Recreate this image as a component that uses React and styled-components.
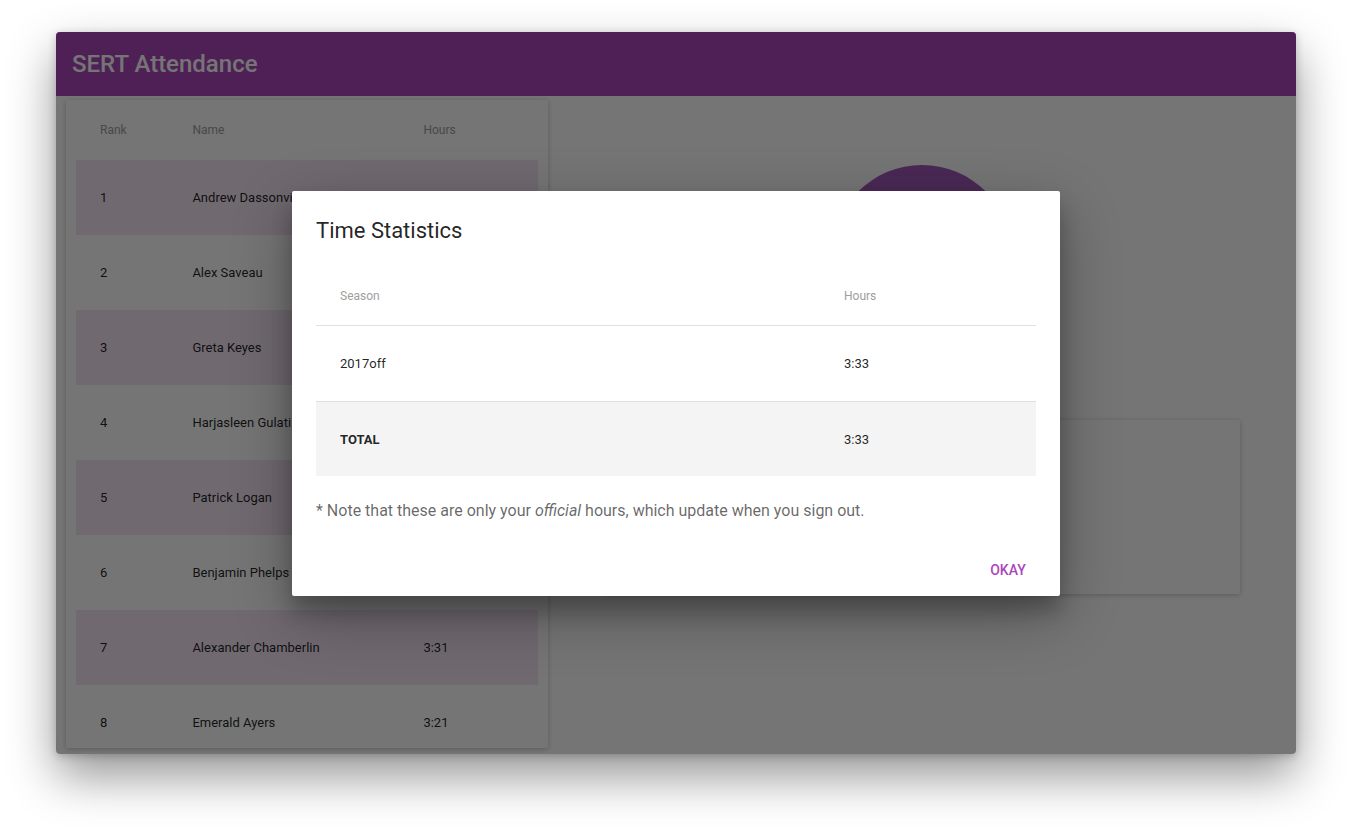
import styled, { createGlobalStyle } from "styled-components";

const Global = createGlobalStyle`
  html, body {
    margin: 0;
    padding: 0;
    background: #fff;
  }
  body {
    font-family: Roboto, "Liberation Sans", sans-serif;
    -webkit-font-smoothing: antialiased;
  }
`;

const Page = styled.div`
  padding: 32px 56px;
  min-height: 834px;
  box-sizing: border-box;
`;

const Window = styled.div`
  position: relative;
  width: 1240px;
  height: 722px;
  border-radius: 4px;
  overflow: hidden;
  background: #fff;
  box-shadow: 0 22px 48px rgba(0, 0, 0, 0.42), 0 2px 8px rgba(0, 0, 0, 0.2);
`;

const AppBar = styled.header`
  height: 64px;
  display: flex;
  align-items: center;
  padding: 0 16px;
  background: #ab47bc;
`;

const Title = styled.h1`
  margin: 0;
  font-size: 24px;
  font-weight: 500;
  color: #fff;
  line-height: 64px;
`;

const Main = styled.div`
  display: flex;
  height: 658px;
`;

const LeftCol = styled.div`
  width: 492px;
  padding: 4px 0 6px 10px;
  box-sizing: border-box;
`;

const Card = styled.div`
  background: #fff;
  box-shadow: 0 1px 6px rgba(0, 0, 0, 0.12), 0 1px 4px rgba(0, 0, 0, 0.12);
  border-radius: 2px;
  padding: 0 10px;
  height: 648px;
  overflow: hidden;
`;

const Row = styled.div`
  display: grid;
  grid-template-columns: ${({ cols }) => cols};
  align-items: center;
  height: ${({ h }) => h}px;
  box-sizing: border-box;
  background: ${({ bg }) => bg || "transparent"};
  border-bottom: ${({ line }) => (line ? "1px solid #e0e0e0" : "none")};
`;

const HeadCell = styled.div`
  padding-left: 24px;
  font-size: 12px;
  color: #9e9e9e;
`;

const Cell = styled.div`
  padding-left: 24px;
  font-size: 13px;
  color: rgba(0, 0, 0, 0.87);
  font-weight: ${({ bold }) => (bold ? 700 : 400)};
  white-space: nowrap;
`;

const RightCol = styled.div`
  flex: 1;
  display: flex;
  flex-direction: column;
  align-items: center;
`;

const Avatar = styled.div`
  width: 180px;
  height: 180px;
  border-radius: 50%;
  background: #a15bb9;
  margin-top: 69px;
`;

const InfoCard = styled.div`
  width: 636px;
  height: 174px;
  margin-top: 75px;
  background: #fff;
  box-shadow: 0 1px 6px rgba(0, 0, 0, 0.12), 0 1px 4px rgba(0, 0, 0, 0.12);
  border-radius: 2px;
`;

const Backdrop = styled.div`
  position: absolute;
  inset: 0;
  background: rgba(0, 0, 0, 0.54);
  display: flex;
  align-items: center;
  justify-content: center;
`;

const Dialog = styled.div`
  width: 768px;
  margin-top: 1px;
  background: #fff;
  border-radius: 2px;
  box-shadow: 0 19px 60px rgba(0, 0, 0, 0.3), 0 15px 20px rgba(0, 0, 0, 0.22);
`;

const DialogTitle = styled.h3`
  margin: 0;
  padding: 24px 24px 20px;
  font-size: 22px;
  font-weight: 400;
  line-height: 32px;
  color: rgba(0, 0, 0, 0.87);
`;

const DialogBody = styled.div`
  padding: 0 24px 22px;
`;

const Note = styled.p`
  margin: 24px 0 0;
  font-size: 16px;
  line-height: 22px;
  color: rgba(0, 0, 0, 0.6);
`;

const Actions = styled.div`
  padding: 8px;
  display: flex;
  justify-content: flex-end;
`;

const FlatButton = styled.button`
  min-width: 88px;
  height: 36px;
  padding: 0 16px;
  border: 0;
  background: transparent;
  font-family: Roboto, "Liberation Sans", sans-serif;
  font-size: 14px;
  font-weight: 500;
  text-transform: uppercase;
  color: #ab47bc;
  border-radius: 2px;
  cursor: pointer;
`;

const leaders = [
  ["1", "Andrew Dassonville", "4:12"],
  ["2", "Alex Saveau", "4:05"],
  ["3", "Greta Keyes", "3:58"],
  ["4", "Harjasleen Gulati", "3:51"],
  ["5", "Patrick Logan", "3:47"],
  ["6", "Benjamin Phelps", "3:40"],
  ["7", "Alexander Chamberlin", "3:31"],
  ["8", "Emerald Ayers", "3:21"],
];

const LEFT_COLS = "20% 50% 30%";
const DIALOG_COLS = "70% 30%";

export default function App() {
  return (
    <Page>
      <Global />
      <Window>
        <AppBar>
          <Title>SERT Attendance</Title>
        </AppBar>
        <Main>
          <LeftCol>
            <Card>
              <Row cols={LEFT_COLS} h={60}>
                <HeadCell>Rank</HeadCell>
                <HeadCell>Name</HeadCell>
                <HeadCell>Hours</HeadCell>
              </Row>
              {leaders.map(([rank, name, hours], i) => (
                <Row
                  key={rank}
                  cols={LEFT_COLS}
                  h={75}
                  bg={i % 2 === 0 ? "#f3e5f5" : undefined}
                >
                  <Cell>{rank}</Cell>
                  <Cell>{name}</Cell>
                  <Cell>{hours}</Cell>
                </Row>
              ))}
            </Card>
          </LeftCol>
          <RightCol>
            <Avatar />
            <InfoCard />
          </RightCol>
        </Main>

        <Backdrop>
          <Dialog>
            <DialogTitle>Time Statistics</DialogTitle>
            <DialogBody>
              <Row cols={DIALOG_COLS} h={59} line>
                <HeadCell>Season</HeadCell>
                <HeadCell>Hours</HeadCell>
              </Row>
              <Row cols={DIALOG_COLS} h={76} line>
                <Cell>2017off</Cell>
                <Cell>3:33</Cell>
              </Row>
              <Row cols={DIALOG_COLS} h={74} bg="#f4f4f4">
                <Cell bold>TOTAL</Cell>
                <Cell>3:33</Cell>
              </Row>
              <Note>
                * Note that these are only your <em>official</em> hours, which
                update when you sign out.
              </Note>
            </DialogBody>
            <Actions>
              <FlatButton>Okay</FlatButton>
            </Actions>
          </Dialog>
        </Backdrop>
      </Window>
    </Page>
  );
}
